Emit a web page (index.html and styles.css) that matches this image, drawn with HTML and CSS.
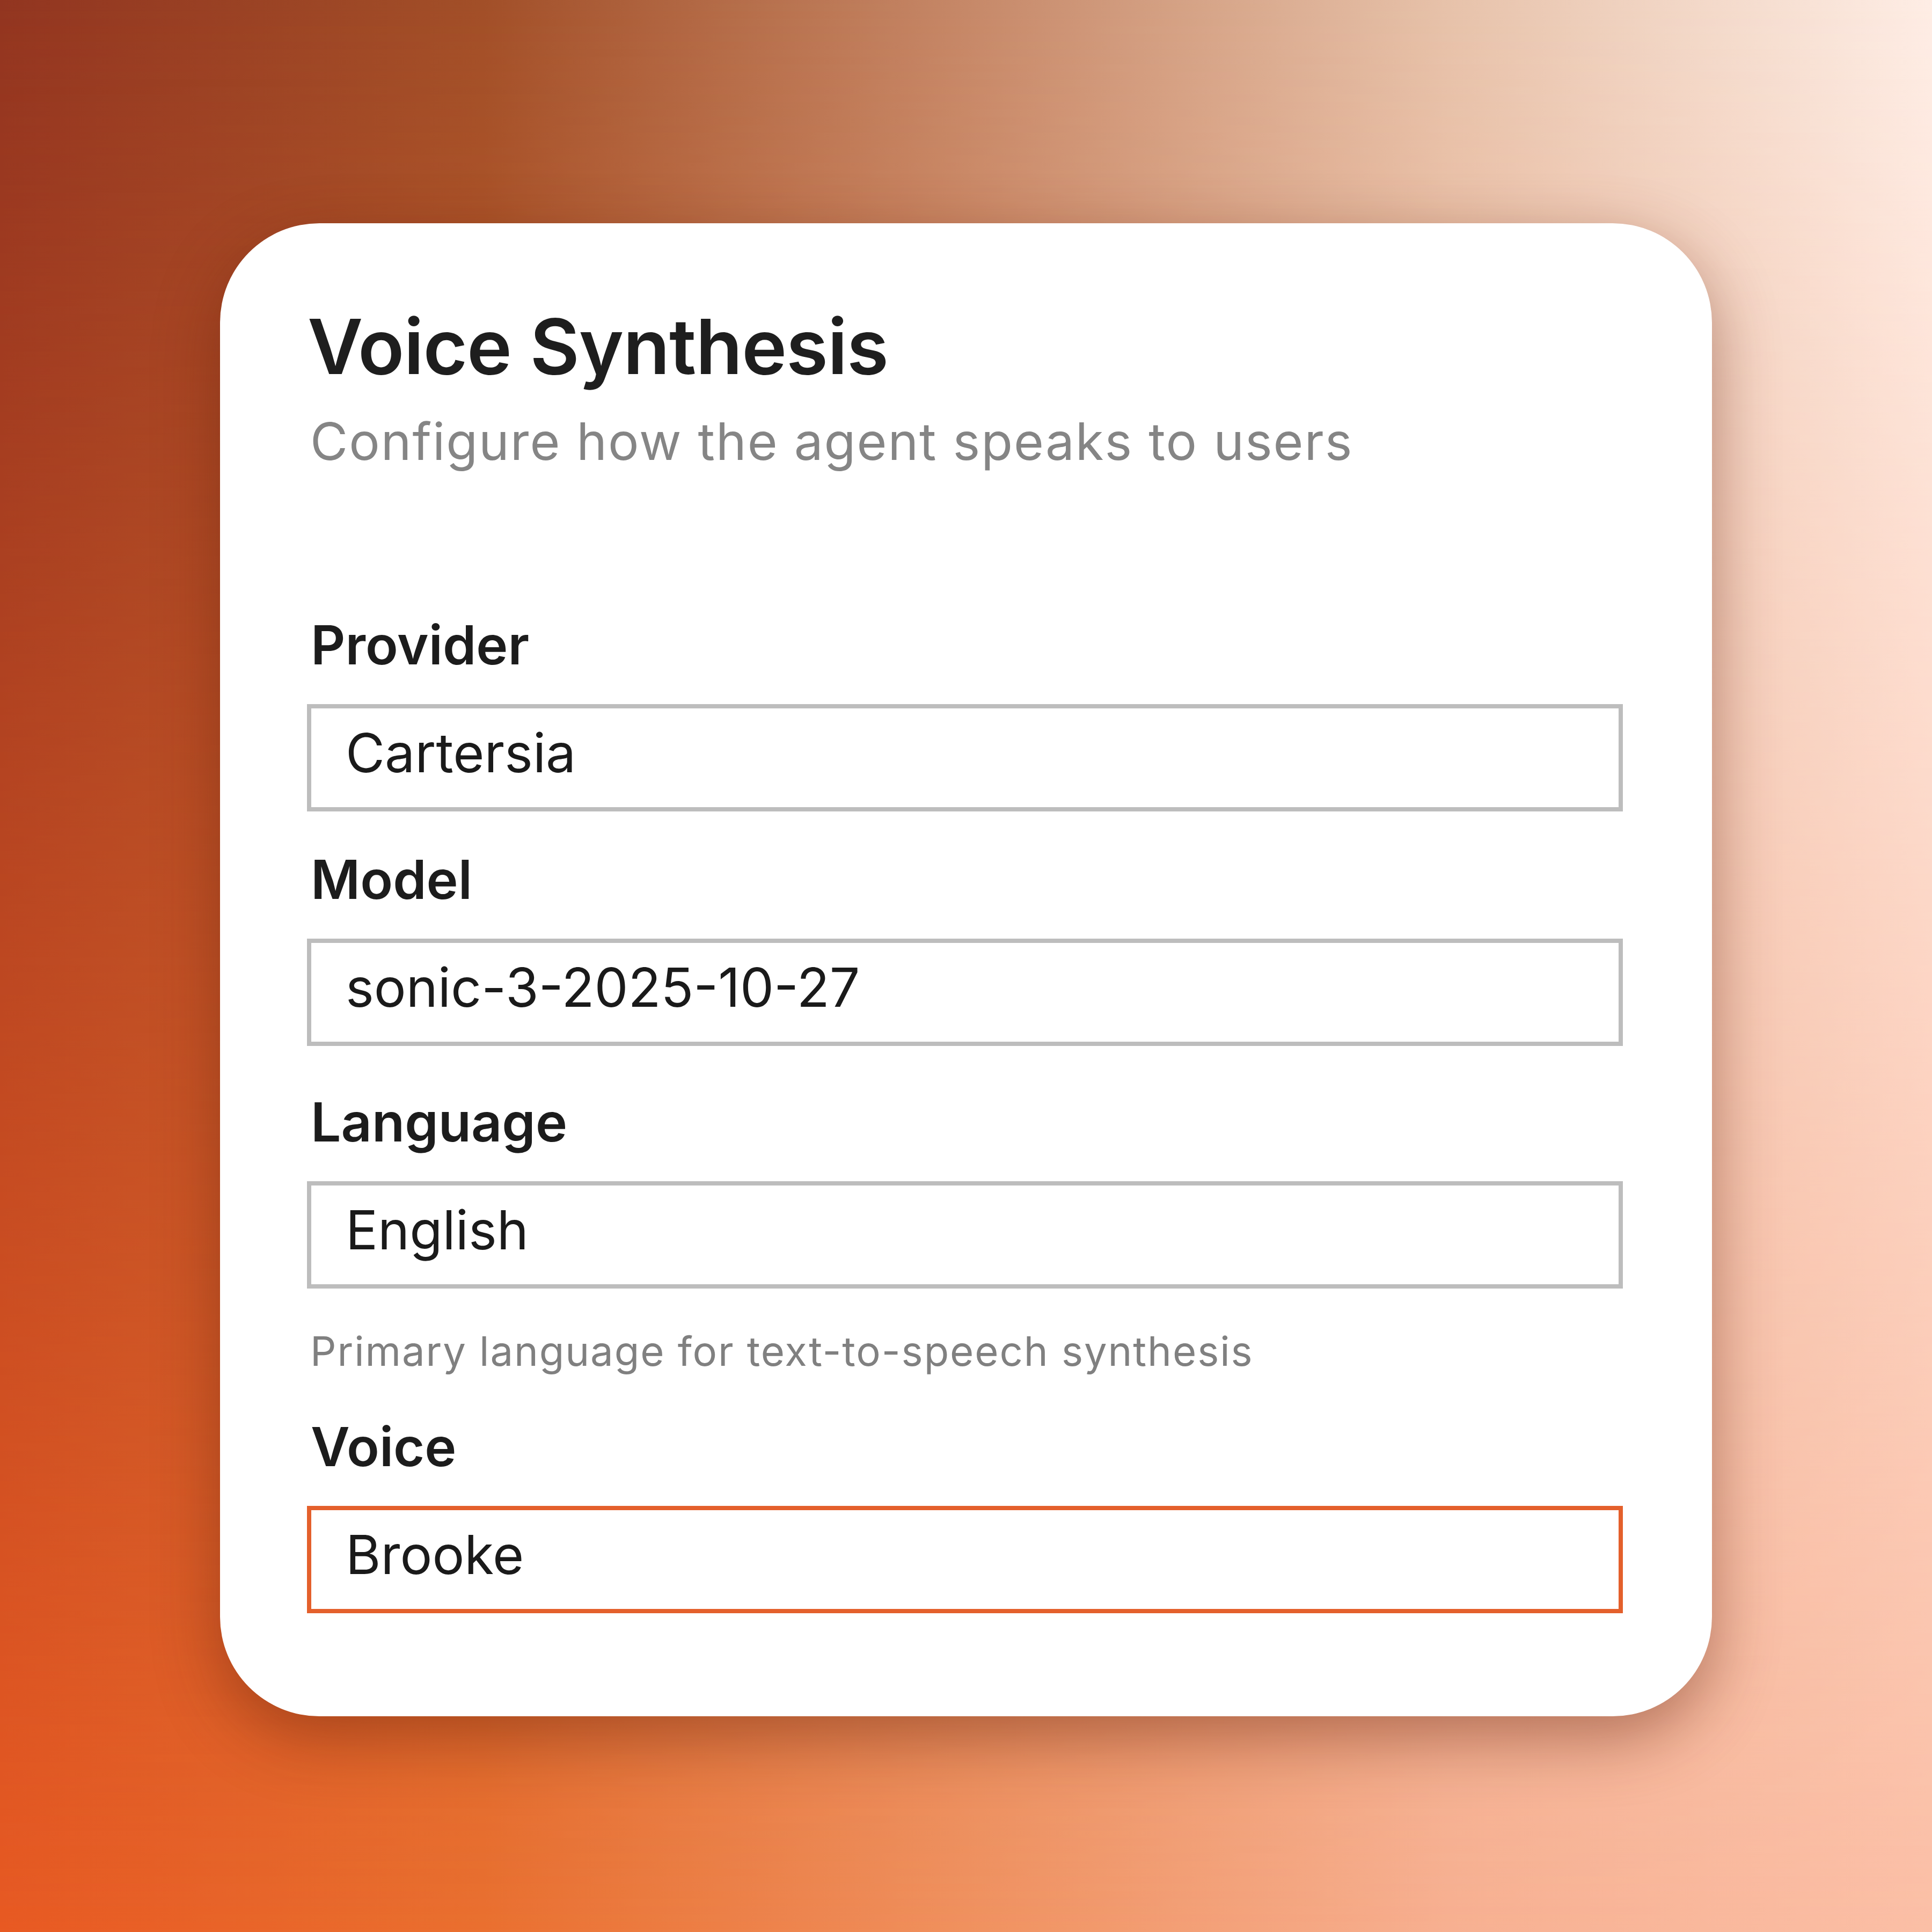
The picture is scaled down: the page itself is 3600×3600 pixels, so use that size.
FILE: index.html
```html
<!DOCTYPE html>
<html>
<head>
  <meta charset="utf-8">
  <meta name="viewport" content="width=device-width">
  <title>Voice Synthesis</title>
  <link rel="stylesheet" href="styles.css">
</head>
<body>
	<main class="card">
		<header class="card-head">
			<h1 class="title">Voice Synthesis</h1>
			<p class="subtitle">Configure how the agent speaks to users</p>
		</header>

		<div class="field field-provider">
			<label class="field-label">Provider</label>
			<div class="field-input">Cartersia</div>
		</div>

		<div class="field field-model">
			<label class="field-label">Model</label>
			<div class="field-input">sonic-3-2025-10-27</div>
		</div>

		<div class="field field-language">
			<label class="field-label">Language</label>
			<div class="field-input">English</div>
			<p class="field-hint">Primary language for text-to-speech synthesis</p>
		</div>

		<div class="field field-voice">
			<label class="field-label">Voice</label>
			<div class="field-input is-active">Brooke</div>
		</div>
	</main>
</body>
</html>
```

FILE: styles.css
```css
	*{
		box-sizing:border-box;
	}
	html,body{
		margin:0;
	}
	body{
		position:relative;
		min-height:3600px;
		padding:416px 0 404px;
		display:flex;
		justify-content:center;
		align-items:flex-start;
		font-family:Inter, "Noto Sans", sans-serif;
		/* bottom row of the backdrop */
		background:linear-gradient(to right, #e85a23 0%, #ea7030 25%, #f0915f 50%, #f7b091 75%, #fbbfa6 100%);
	}
	/* top row, faded out downwards so the two rows blend */
	body::before{
		content:"";
		position:absolute;
		inset:0;
		background:linear-gradient(to right, #923520 0%, #a24f28 25%, #c68868 50%, #e7c2aa 75%, #feede5 100%);
		-webkit-mask-image:linear-gradient(to bottom, #000 0%, rgba(0,0,0,0.55) 45%, transparent 100%);
		mask-image:linear-gradient(to bottom, #000 0%, rgba(0,0,0,0.55) 45%, transparent 100%);
	}
	.card{
		position:relative;
		width:2780px;
		padding:158px 166px 192px 162px;
		background:#fff;
		border-radius:185px;
		box-shadow:0 40px 120px rgba(100,30,10,0.45);
	}
	.title,
	.subtitle,
	.field-label,
	.field-hint{
		margin:0;
		padding-left:6px;
		line-height:1;
	}
	.title{
		padding-left:1px;
		font-size:142px;
		font-weight:600;
		color:#1e1e1e;
		letter-spacing:-1.1px;
	}
	.subtitle{
		margin-top:58px;
		font-size:96px;
		color:#858585;
		letter-spacing:2px;
	}
	.field{
		display:flex;
		flex-direction:column;
	}
	.field-provider{
		margin-top:282px;
	}
	.field-model{
		margin-top:77px;
	}
	.field-language{
		margin-top:92px;
	}
	.field-voice{
		margin-top:91px;
	}
	.field-label{
		display:block;
		padding-left:7px;
		font-size:100px;
		font-weight:600;
		color:#1c1c1c;
	}
	.field-input{
		margin-top:60px;
		height:200px;
		padding:33px 64px 0;
		border:8px solid #bdbdbd;
		font-size:100px;
		line-height:100px;
		color:#1a1a1a;
	}
	.field-input.is-active{
		border-color:#e4602c;
	}
	.field-hint{
		margin-top:78px;
		font-size:76px;
		color:#808080;
		letter-spacing:1.9px;
	}
```
